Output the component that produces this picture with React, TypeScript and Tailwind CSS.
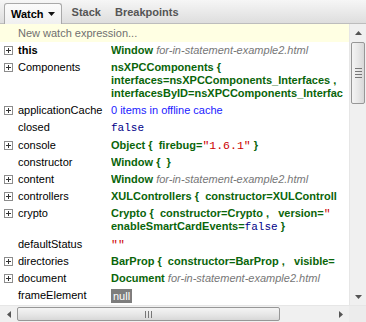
import React from 'react';

const G = 'text-[#0a650a] font-bold';
const GRAY_I = 'text-[#777] italic font-normal';
const MONO = "font-['Liberation_Mono',monospace] font-normal";

function Plus() {
    return (
        <svg width="9" height="9" viewBox="0 0 9 9" className="block">
            <rect x="0.5" y="0.5" width="8" height="8" fill="#fff" stroke="#8c8c8c" />
            <path d="M2 4.5h5M4.5 2v5" stroke="#333" strokeWidth="1" />
        </svg>
    );
}

function Row({ name, expand, bold, children }: { name: string; expand?: boolean; bold?: boolean; children: React.ReactNode }) {
    return (
        <div className="flex items-start py-[2px] leading-[13px] whitespace-nowrap">
            <div className="w-[18px] pl-[4px] pt-[2px] shrink-0">{expand && <Plus />}</div>
            <div className={`w-[93px] shrink-0 text-black ${bold ? 'font-bold' : ''}`}>{name}</div>
            <div className="flex-1 min-w-0 overflow-hidden">{children}</div>
        </div>
    );
}

function Str({ v }: { v: string }) {
    return <span className={`${MONO} text-[#cc0000] text-[11.5px]`}>"{v}"</span>;
}

export default function App() {
    return (
        <div className="w-[366px] h-[322px] overflow-hidden bg-white flex flex-col font-['Liberation_Sans',Arial,sans-serif] text-[11px]">
            {/* tabs */}
            <div className="h-[24px] shrink-0 flex items-end pl-[4px] gap-[8px] bg-gradient-to-b from-[#f6f6f6] to-[#dedede] border-b border-[#bdbdbd]">
                <div className="h-[21px] px-[6px] flex items-center gap-[4px] bg-gradient-to-b from-[#fbfbfb] to-[#f0f0f0] border border-b-0 border-[#a9a9a9] rounded-t-[3px] -mb-px font-bold text-black">
                    Watch
                    <svg width="7" height="4" viewBox="0 0 7 4"><path d="M0 0h7L3.5 4z" fill="#111" /></svg>
                </div>
                <div className="h-[21px] px-[2px] flex items-center font-bold text-[#555]">Stack</div>
                <div className="h-[21px] px-[4px] flex items-center font-bold text-[#555]">Breakpoints</div>
            </div>
            <div className="flex-1 flex min-h-0">
                <div className="flex-1 min-w-0 overflow-hidden">
                    <div className="h-[18px] bg-[#ffffe3] pl-[18px] flex items-center text-[#707070]">New watch expression...</div>
                    <Row name="this" expand bold>
                        <span className={G}>Window</span> <span className={GRAY_I}>for-in-statement-example2.html</span>
                    </Row>
                    <Row name="Components" expand>
                        <div className={G}>nsXPCComponents {'{'}</div>
                        <div className={G}>interfaces=nsXPCComponents_Interfaces ,</div>
                        <div className={G}>interfacesByID=nsXPCComponents_Interfac</div>
                    </Row>
                    <Row name="applicationCache" expand>
                        <span className="text-[#1a1aff]">0 items in offline cache</span>
                    </Row>
                    <Row name="closed">
                        <span className={`${MONO} text-[#000088]`}>false</span>
                    </Row>
                    <Row name="console" expand>
                        <span className={G}>Object {'{'}&nbsp; firebug=</span><Str v="1.6.1" /><span className={G}> {'}'}</span>
                    </Row>
                    <Row name="constructor">
                        <span className={G}>Window {'{'}&nbsp; {'}'}</span>
                    </Row>
                    <Row name="content" expand>
                        <span className={G}>Window</span> <span className={GRAY_I}>for-in-statement-example2.html</span>
                    </Row>
                    <Row name="controllers" expand>
                        <span className={G}>XULControllers {'{'}&nbsp; constructor=XULControll</span>
                    </Row>
                    <Row name="crypto" expand>
                        <div className={G}>Crypto {'{'}&nbsp; constructor=Crypto ,&nbsp;&nbsp; version=<span className={`${MONO} text-[#cc0000] text-[11.5px]`}>"</span></div>
                        <div className={G}>enableSmartCardEvents=<span className={`${MONO} text-[#000088]`}>false</span> {'}'}</div>
                    </Row>
                    <Row name="defaultStatus">
                        <Str v="" />
                    </Row>
                    <Row name="directories" expand>
                        <span className={G}>BarProp {'{'}&nbsp; constructor=BarProp ,&nbsp;&nbsp; visible=</span>
                    </Row>
                    <Row name="document" expand>
                        <span className={G}>Document</span> <span className={GRAY_I}>for-in-statement-example2.html</span>
                    </Row>
                    <Row name="frameElement">
                        <span className="bg-[#7d7d7d] text-white px-[2px] inline-block leading-[14px]">null</span>
                    </Row>
                </div>
                {/* vertical scrollbar */}
                <div className="w-[17px] shrink-0 bg-[#f0f0f0] border-l border-[#e6e6e6] flex flex-col">
                    <div className="h-[17px] flex items-center justify-center">
                        <svg width="7" height="4" viewBox="0 0 7 4"><path d="M0 4h7L3.5 0z" fill="#555" /></svg>
                    </div>
                    <div className="h-[62px] mx-px mt-px rounded-[2px] border border-[#979797] bg-gradient-to-r from-[#f4f4f4] via-[#e8e8e8] to-[#d8d8d8] flex flex-col items-center justify-center gap-[2px]">
                        <div className="w-[7px] h-px bg-[#777]" />
                        <div className="w-[7px] h-px bg-[#777]" />
                        <div className="w-[7px] h-px bg-[#777]" />
                        <div className="w-[7px] h-px bg-[#777]" />
                    </div>
                    <div className="flex-1" />
                    <div className="h-[17px] flex items-center justify-center">
                        <svg width="7" height="4" viewBox="0 0 7 4"><path d="M0 0h7L3.5 4z" fill="#555" /></svg>
                    </div>
                </div>
            </div>
            {/* horizontal scrollbar */}
            <div className="h-[17px] shrink-0 flex bg-[#f0f0f0] border-t border-[#e6e6e6]">
                <div className="w-[17px] flex items-center justify-center">
                    <svg width="4" height="7" viewBox="0 0 4 7"><path d="M4 0v7L0 3.5z" fill="#555" /></svg>
                </div>
                <div className="w-[263px] my-px rounded-[2px] border border-[#979797] bg-gradient-to-b from-[#f4f4f4] via-[#e8e8e8] to-[#d8d8d8] flex items-center justify-center gap-[2px]">
                    <div className="w-px h-[7px] bg-[#777]" />
                    <div className="w-px h-[7px] bg-[#777]" />
                    <div className="w-px h-[7px] bg-[#777]" />
                </div>
                <div className="flex-1" />
                <div className="w-[17px] flex items-center justify-center">
                    <svg width="4" height="7" viewBox="0 0 4 7"><path d="M0 0v7L4 3.5z" fill="#555" /></svg>
                </div>
                <div className="w-[17px] bg-[#ececec]" />
            </div>
        </div>
    );
}
